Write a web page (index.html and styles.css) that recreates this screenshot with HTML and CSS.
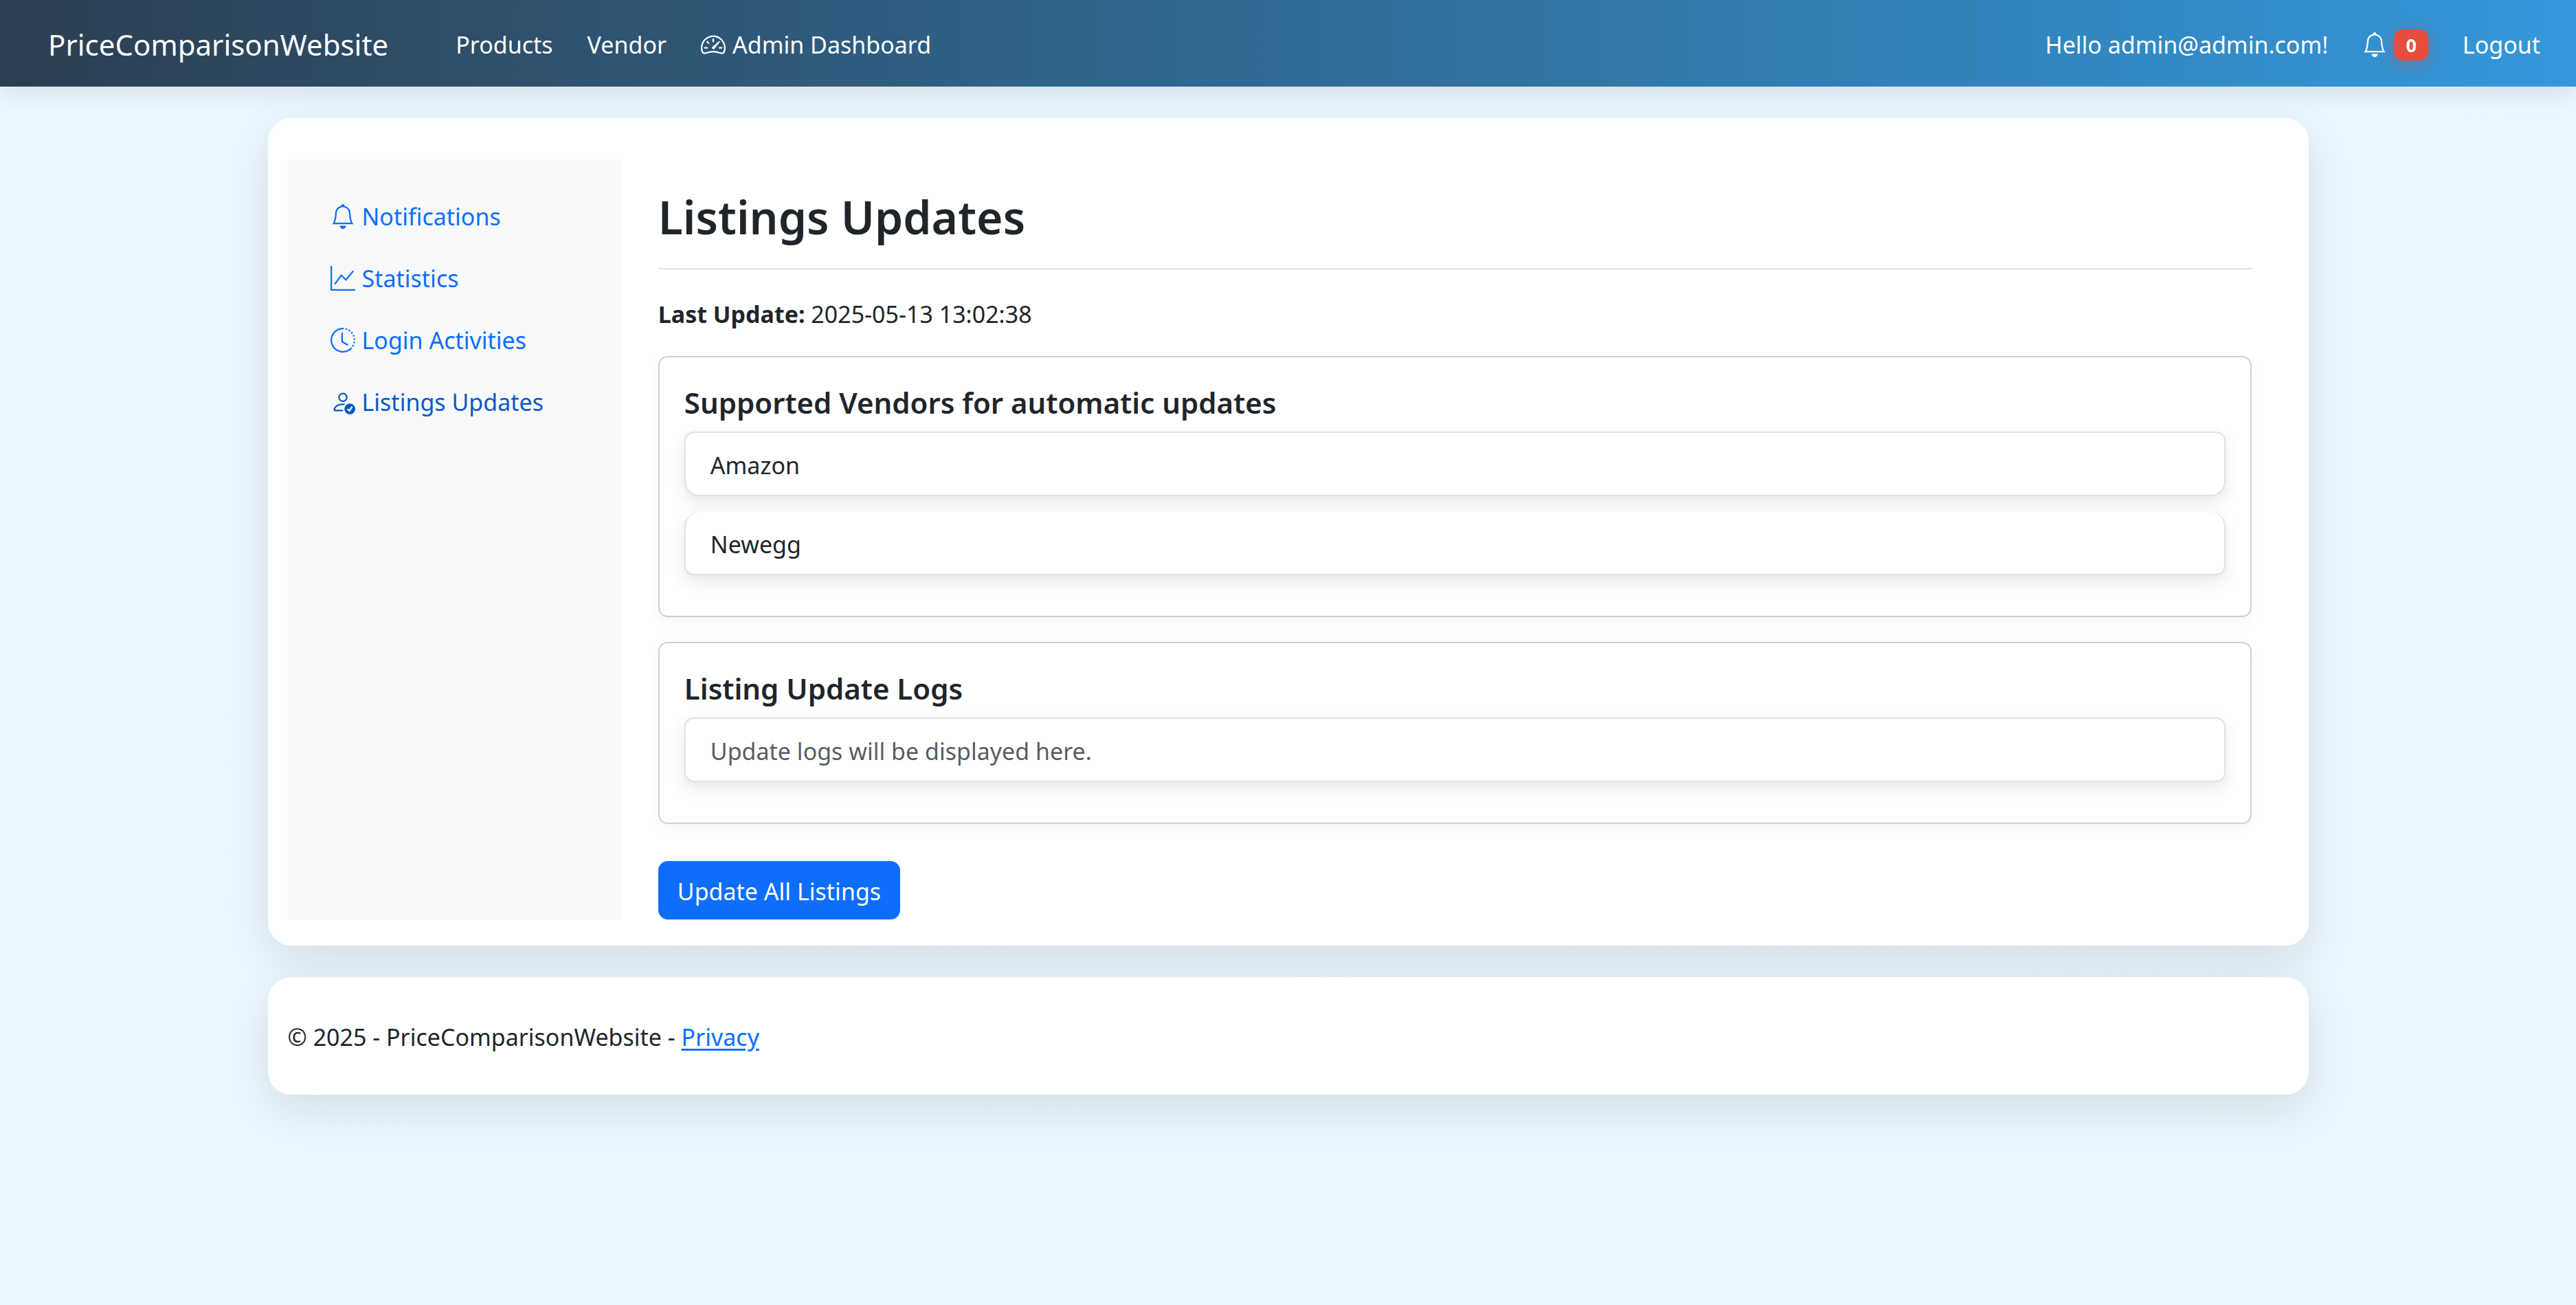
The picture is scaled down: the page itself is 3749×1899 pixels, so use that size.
FILE: index.html
```html
<!DOCTYPE html>
<html lang="en">
<head>
<meta charset="utf-8">
<meta name="viewport" content="width=device-width, initial-scale=1">
<title>Listings Updates - PriceComparisonWebsite</title>
<link rel="stylesheet" href="styles.css">
</head>
<body>
<svg class="icon-defs" aria-hidden="true">
  <symbol id="bell" viewBox="0 0 16 16"><path d="M8 16a2 2 0 0 0 2-2H6a2 2 0 0 0 2 2M8 1.918l-.797.161A4 4 0 0 0 4 6c0 .628-.134 2.197-.459 3.742-.16.767-.376 1.566-.663 2.258h10.244c-.287-.692-.502-1.49-.663-2.258C12.134 8.197 12 6.628 12 6a4 4 0 0 0-3.203-3.92zM14.22 12c.223.447.481.801.78 1H1c.299-.199.557-.553.78-1C2.68 10.2 3 6.88 3 6c0-2.42 1.72-4.44 4.005-4.901a1 1 0 1 1 1.99 0A5 5 0 0 1 13 6c0 .88.32 4.2 1.22 6"/></symbol>
  <symbol id="speedometer" viewBox="0 0 16 16"><path d="M8 4a.5.5 0 0 1 .5.5V6a.5.5 0 0 1-1 0V4.5A.5.5 0 0 1 8 4M3.732 5.732a.5.5 0 0 1 .707 0l.915.914a.5.5 0 1 1-.708.708l-.914-.915a.5.5 0 0 1 0-.707M2 10a.5.5 0 0 1 .5-.5h1.586a.5.5 0 0 1 0 1H2.5A.5.5 0 0 1 2 10m9.5 0a.5.5 0 0 1 .5-.5h1.5a.5.5 0 0 1 0 1H12a.5.5 0 0 1-.5-.5m.754-4.246a.39.39 0 0 0-.527-.02L7.547 9.31a.91.91 0 1 0 1.302 1.258l3.434-4.297a.39.39 0 0 0-.029-.518z"/><path fill-rule="evenodd" d="M0 10a8 8 0 1 1 15.547 2.661c-.442 1.253-1.845 1.602-2.932 1.25C11.309 13.488 9.475 13 8 13c-1.474 0-3.31.488-4.615.911-1.087.352-2.49.003-2.932-1.25A8 8 0 0 1 0 10m8-7a7 7 0 0 0-6.603 9.329c.203.575.923.876 1.68.63C4.397 12.533 6.358 12 8 12s3.604.532 4.923.96c.757.245 1.477-.056 1.68-.631A7 7 0 0 0 8 3"/></symbol>
  <symbol id="graph" viewBox="0 0 16 16"><path fill-rule="evenodd" d="M0 0h1v15h15v1H0zm14.817 3.113a.5.5 0 0 1 .07.704l-4.5 5.5a.5.5 0 0 1-.74.037L7.06 6.767l-3.656 5.027a.5.5 0 0 1-.808-.588l4-5.5a.5.5 0 0 1 .758-.06l2.609 2.61 4.15-5.073a.5.5 0 0 1 .704-.07"/></symbol>
  <symbol id="history" viewBox="0 0 16 16"><path d="M8.515 1.019A7 7 0 0 0 8 1V0a8 8 0 0 1 .589.022zm2.004.45a7 7 0 0 0-.985-.299l.219-.976q.576.129 1.126.342zm1.37.71a7 7 0 0 0-.439-.27l.493-.87a8 8 0 0 1 .979.654l-.615.789a7 7 0 0 0-.418-.302zm1.834 1.79a7 7 0 0 0-.653-.796l.724-.69q.406.429.747.91zm.744 1.352a7 7 0 0 0-.214-.468l.893-.45a8 8 0 0 1 .45 1.088l-.95.313a7 7 0 0 0-.179-.483m.53 2.507a7 7 0 0 0-.1-1.025l.985-.17q.1.58.116 1.17zm-.131 1.538q.05-.254.081-.51l.993.123a8 8 0 0 1-.23 1.155l-.964-.267q.069-.247.12-.501m-.952 2.379q.276-.436.486-.908l.914.405q-.24.54-.555 1.038zm-.964 1.205q.183-.183.35-.378l.758.653a8 8 0 0 1-.401.432z"/><path d="M8 1a7 7 0 1 0 4.95 11.95l.707.707A8.001 8.001 0 1 1 8 0z"/><path d="M7.5 3a.5.5 0 0 1 .5.5v5.21l3.248 1.856a.5.5 0 0 1-.496.868l-3.5-2A.5.5 0 0 1 7 9V3.5a.5.5 0 0 1 .5-.5"/></symbol>
  <symbol id="person-check" viewBox="0 0 16 16"><path d="M12.5 16a3.5 3.5 0 1 0 0-7 3.5 3.5 0 0 0 0 7m1.679-4.493-1.335 2.226a.75.75 0 0 1-1.174.144l-.774-.773a.5.5 0 0 1 .708-.708l.547.548 1.17-1.951a.5.5 0 1 1 .858.514M11 5a3 3 0 1 1-6 0 3 3 0 0 1 6 0M8 7a2 2 0 1 0 0-4 2 2 0 0 0 0 4"/><path d="M8.256 14a4.5 4.5 0 0 1-.229-1.004H3c.001-.246.154-.986.832-1.664C4.484 10.68 5.711 10 8 10q.39 0 .74.025c.226-.341.496-.65.804-.918Q8.844 9.002 8 9c-5 0-6 3-6 4s1 1 1 1z"/></symbol>
</svg>

<header class="navbar">
  <a class="brand" href="#">PriceComparisonWebsite</a>
  <nav class="nav-links" aria-label="Main">
    <a class="nav-link" href="#">Products</a>
    <a class="nav-link" href="#">Vendor</a>
    <a class="nav-link" href="#"><svg class="icon" aria-hidden="true"><use href="#speedometer"/></svg>Admin Dashboard</a>
  </nav>
  <nav class="nav-links nav-user" aria-label="Account">
    <a class="nav-link" href="#">Hello admin@admin.com!</a>
    <a class="nav-link" href="#" aria-label="Notifications, 0 unread"><svg class="icon" aria-hidden="true"><use href="#bell"/></svg><span class="badge">0</span></a>
    <button class="nav-link" type="button">Logout</button>
  </nav>
</header>

<main class="panel layout">
  <nav class="sidebar" aria-label="Admin">
    <a class="side-link" href="#"><svg class="icon" aria-hidden="true"><use href="#bell"/></svg>Notifications</a>
    <a class="side-link" href="#"><svg class="icon" aria-hidden="true"><use href="#graph"/></svg>Statistics</a>
    <a class="side-link" href="#"><svg class="icon" aria-hidden="true"><use href="#history"/></svg>Login Activities</a>
    <a class="side-link active" href="#" aria-current="page"><svg class="icon" aria-hidden="true"><use href="#person-check"/></svg>Listings Updates</a>
  </nav>
  <div class="content">
    <h1 class="title">Listings Updates</h1>
    <p class="last-update"><strong>Last Update:</strong> 2025-05-13 13:02:38</p>
    <section class="card">
      <h2 class="card-title">Supported Vendors for automatic updates</h2>
      <ul class="list">
        <li class="list-item">Amazon</li>
        <li class="list-item">Newegg</li>
      </ul>
    </section>
    <section class="card">
      <h2 class="card-title">Listing Update Logs</h2>
      <ul class="list">
        <li class="list-item muted">Update logs will be displayed here.</li>
      </ul>
    </section>
    <button class="btn" type="button">Update All Listings</button>
  </div>
</main>

<footer class="panel footer">© 2025 - PriceComparisonWebsite - <a href="#">Privacy</a></footer>
</body>
</html>
```
FILE: styles.css
```css
*, *::before, *::after { box-sizing: border-box; }

body {
  margin: 0;
  min-height: 100vh;
  font-family: "Segoe UI", "Noto Sans", "Open Sans", sans-serif;
  font-size: 34px;
  line-height: 54px;
  color: #212529;
  background: linear-gradient(135deg, #ebf7ff, #eaf6fd);
}

h1, h2, p, ul { margin: 0; padding: 0; }
button { font: inherit; border: 0; cursor: pointer; }

.icon-defs { position: absolute; width: 0; height: 0; }
.icon { flex: none; width: 36px; height: 36px; fill: currentColor; }

/* Top bar */
.navbar {
  display: flex;
  align-items: center;
  padding: 20px 34px 16px 70px;
  color: #fff;
  background: linear-gradient(90deg, #2c3e50, #3498db);
  box-shadow: 0 9px 34px rgba(0, 0, 0, .1);
}
.brand {
  margin-right: 80px;
  font-size: 42px;
  color: inherit;
  text-decoration: none;
}
.nav-links { display: flex; align-items: center; gap: 14px; }
.nav-user { margin-left: auto; }
.nav-link {
  display: flex;
  align-items: center;
  gap: 10px;
  padding: 18px;
  color: inherit;
  background: none;
  text-decoration: none;
}
.badge {
  padding: 0 17px;
  border-radius: 13px;
  font-size: 27px;
  font-weight: 700;
  line-height: 45px;
  background: #e74c3c;
  box-shadow: 0 4px 22px rgba(231, 76, 60, .4);
}

/* Page panels */
.panel {
  max-width: 2970px;
  margin: 46px auto 0;
  border-radius: 34px;
  background: rgba(255, 255, 255, .95);
  box-shadow: 0 22px 68px rgba(0, 0, 0, .1);
}
.layout { display: flex; padding: 60px 29px 38px; }
.footer { padding: 60px 29px 57px; }

a { color: #0d6efd; text-underline-offset: 4px; }

.sidebar {
  flex: 0 0 calc(100% / 6);
  padding: 38px 62px;
  background: #f8f9fa;
}
.side-link {
  display: flex;
  align-items: center;
  gap: 10px;
  padding: 18px 0;
  text-decoration: none;
}
.side-link.active { color: #0a58ca; }

.content { flex: 1; min-width: 0; padding: 36px 54px 0; }
.title {
  padding: 4px 0 32px;
  border-bottom: 2px solid #dee2e6;
  font-size: 66px;
  font-weight: 600;
  line-height: 86px;
}
.last-update { padding: 38px 0 34px; }

.card {
  margin-bottom: 36px;
  padding: 36px;
  border: 2px solid #d0d0d1;
  border-radius: 14px;
  background: #fff;
  box-shadow: 0 5px 18px rgba(0, 0, 0, .04);
}
.card-title { padding: 3px 0 15px; font-size: 42px; font-weight: 600; }

.list { list-style: none; }
.list-item {
  margin-bottom: 23px;
  padding: 20px 36px 16px;
  border: 2px solid #dee2e6;
  border-radius: 22px;
  background: #fff;
  box-shadow: 0 9px 22px rgba(0, 0, 0, .1);
}
.list-item + .list-item { border-top: 0; }
.list-item:first-child { border-top-left-radius: 14px; border-top-right-radius: 14px; }
.list-item:last-child { border-bottom-left-radius: 14px; border-bottom-right-radius: 14px; }
.muted { color: rgba(33, 37, 41, .75); }

.btn {
  margin-top: 18px;
  padding: 17px 28px 14px;
  border-radius: 14px;
  color: #fff;
  background: #0d6efd;
}
```
